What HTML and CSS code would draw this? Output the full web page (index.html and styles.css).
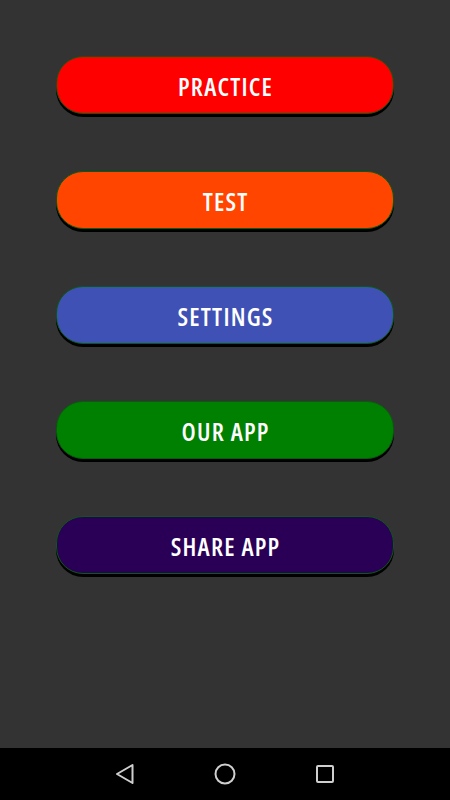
FILE: index.html
```html
<!DOCTYPE html>
<html lang="en">

<head>
    <meta charset="UTF-8">
    <meta name="viewport" content="width=device-width, initial-scale=1.0">
    <title>Main Menu</title>
    <link rel="stylesheet" href="styles.css">
</head>

<body>
    <div class="screen">
        <div class="menu">
            <button class="menu-btn practice">PRACTICE</button>
            <button class="menu-btn test">TEST</button>
            <button class="menu-btn settings">SETTINGS</button>
            <button class="menu-btn our-app">OUR APP</button>
            <button class="menu-btn share">SHARE APP</button>
        </div>
    </div>

    <div class="nav-bar">
        <svg class="nav-icon" width="24" height="24" viewBox="0 0 24 24">
            <path d="M19.5 3 L4 12 L19.5 21 Z" fill="none" stroke="#cfcfcf" stroke-width="2" stroke-linejoin="round" />
        </svg>
        <svg class="nav-icon" width="24" height="24" viewBox="0 0 24 24">
            <circle cx="12" cy="12" r="9.5" fill="none" stroke="#cfcfcf" stroke-width="2" />
        </svg>
        <svg class="nav-icon" width="24" height="24" viewBox="0 0 24 24">
            <rect x="4" y="4" width="16" height="16" rx="1" fill="none" stroke="#cfcfcf" stroke-width="2" />
        </svg>
    </div>
</body>

</html>
```

FILE: styles.css
```css
body {
    margin: 0;
    padding: 0;
    width: 450px;
    height: 800px;
    display: flex;
    flex-direction: column;
    background-color: #333333;
    font-family: "Open Sans", sans-serif;
}

.screen {
    flex: 1;
}

.menu {
    display: flex;
    flex-direction: column;
    gap: 57px;
    padding: 56px 56px 0;
}

.menu-btn {
    height: 58px;
    width: 100%;
    padding: 1px 0 0 1.2px;
    border: 1px solid #0b5a12;
    border-radius: 27px;
    box-shadow: 0 3px 0 #000000;
    color: #ffffff;
    font-family: inherit;
    font-size: 25px;
    font-weight: 600;
    font-stretch: 75%;
    letter-spacing: 1.2px;
    cursor: pointer;
}

.practice {
    background-color: #ff0000;
}

.test {
    background-color: #ff4500;
}

.settings {
    background-color: #3f51b5;
}

.our-app {
    background-color: #008000;
}

.share {
    background-color: #2a0057;
}

.nav-bar {
    height: 52px;
    background-color: #000000;
    display: flex;
    justify-content: center;
    align-items: center;
    gap: 76px;
}
```
